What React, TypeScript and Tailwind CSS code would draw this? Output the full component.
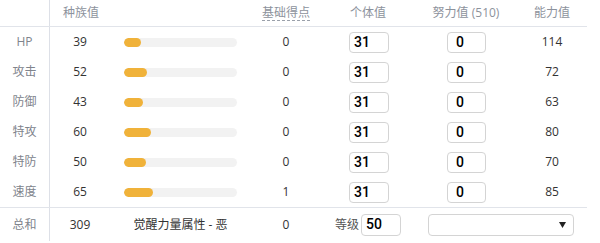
import React from "react";

const stats = [
  { name: "HP", base: 39, ev: 0, total: 114, bp: 0 },
  { name: "攻击", base: 52, ev: 0, total: 72, bp: 0 },
  { name: "防御", base: 43, ev: 0, total: 63, bp: 0 },
  { name: "特攻", base: 60, ev: 0, total: 80, bp: 0 },
  { name: "特防", base: 50, ev: 0, total: 70, bp: 0 },
  { name: "速度", base: 65, ev: 0, total: 85, bp: 1 },
];

const cols = "grid grid-cols-[50px_60px_141px_70px_94px_102px_70px] w-[587px]";
const font = { fontFamily: '"Open Sans", "Noto Sans CJK SC", sans-serif' };
const inputFont = { fontFamily: 'Roboto, "Liberation Sans", Arial, sans-serif' };

export default function App() {
  return (
    <div className="w-[600px] h-[243px] bg-white text-[12px] text-[#333]" style={font}>
      <div className={`${cols} h-[27px] border-b border-[#e1e4ea] items-center text-[#8d929c]`}>
        <div className="h-full border-r border-[#dde0e7]" />
        <div className="text-center pl-[2px]">种族值</div>
        <div />
        <div className="text-center">
          <span className="border-b border-dashed border-[#9aa0aa] leading-[14px] inline-block">基础得点</span>
        </div>
        <div className="text-center">个体值</div>
        <div className="text-center">努力值 (510)</div>
        <div className="text-center">能力值</div>
      </div>
      {stats.map((s) => (
        <div key={s.name} className={`${cols} h-[30px] items-center`}>
          <div className="h-full border-r border-[#dde0e7] flex items-center justify-center text-[#80848c]">{s.name}</div>
          <div className="text-center">{s.base}</div>
          <div className="pl-[14px]">
            <div className="w-[113px] h-[9px] rounded-full bg-[#f2f2f2] overflow-hidden">
              <div className="h-full rounded-full bg-[#f0b23a]" style={{ width: `${(s.base / 255) * 113}px` }} />
            </div>
          </div>
          <div className="text-center">{s.bp}</div>
          <div className="pl-[28px]">
            <div className="w-[40px] h-[21px] border border-[#d4d4d4] rounded-[4px] flex items-center pl-[4px] text-[14px] font-medium text-black" style={inputFont}>31</div>
          </div>
          <div className="pl-[32px]">
            <div className="w-[39px] h-[21px] border border-[#d4d4d4] rounded-[4px] flex items-center pl-[8px] text-[14px] font-medium text-black" style={inputFont}>0</div>
          </div>
          <div className="text-center">{s.total}</div>
        </div>
      ))}
      <div className={`${cols} h-[34px] border-t border-[#e1e4ea] items-center`}>
        <div className="h-full border-r border-[#dde0e7] flex items-center justify-center text-[#80848c]">总和</div>
        <div className="text-center">309</div>
        <div className="text-center">觉醒力量属性 - 恶</div>
        <div className="text-center">0</div>
        <div className="flex items-center pl-[14px] gap-[2px]">
          <span className="text-[#555]">等级</span>
          <div className="w-[40px] h-[22px] border border-[#d4d4d4] rounded-[4px] flex items-center pl-[4px] text-[14px] font-medium text-black" style={inputFont}>50</div>
        </div>
        <div className="col-span-2 pl-[13px]">
          <div className="w-[146px] h-[22px] border border-[#d4d4d4] rounded-[4px] flex items-center justify-end pr-[7px]">
            <svg width="7" height="6" viewBox="0 0 7 6"><path d="M0 0h7L3.5 6z" fill="#222" /></svg>
          </div>
        </div>
      </div>
    </div>
  );
}
